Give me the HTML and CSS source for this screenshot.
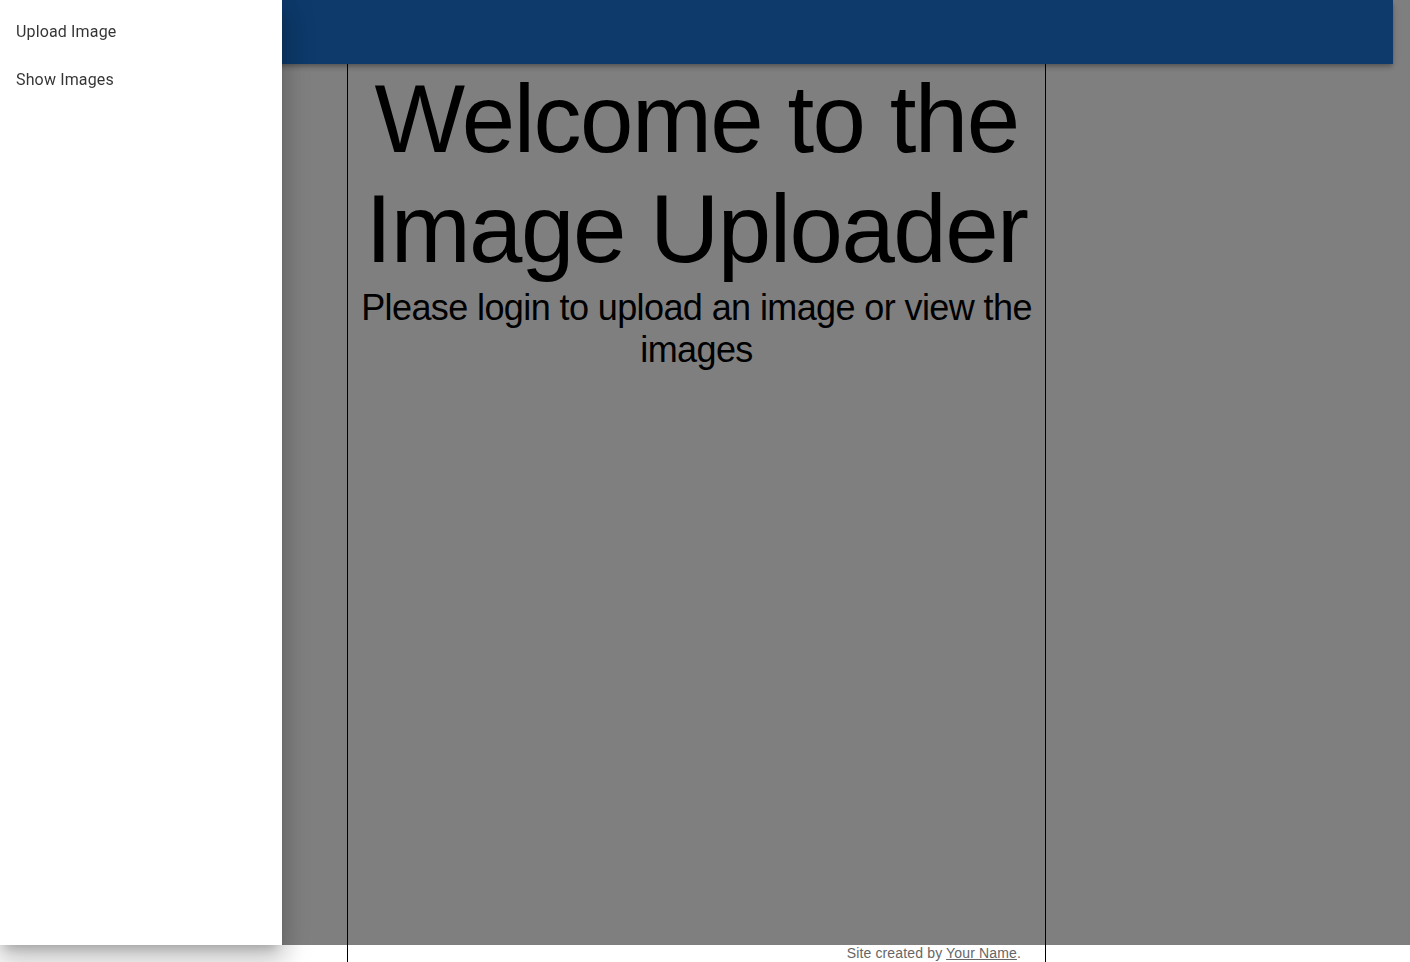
FILE: index.html
```html
<!DOCTYPE html>
<html lang="en">
<head>
<meta charset="utf-8">
<title>Image Uploader</title>
<link rel="stylesheet" href="styles.css">
</head>
<body>
<div class="page">
  <main class="column">
    <h1 class="title">Welcome to the Image Uploader</h1>
    <p class="subtitle">Please login to upload an image or view the images</p>
    <footer class="footer">Site created by <a href="#" class="footer-link">Your Name</a>.</footer>
  </main>
</div>
<div class="backdrop"></div>
<header class="app-bar"></header>
<nav class="drawer">
  <ul class="nav-list">
    <li class="nav-item"><span class="nav-text">Upload Image</span></li>
    <li class="nav-item"><span class="nav-text">Show Images</span></li>
  </ul>
</nav>
</body>
</html>
```

FILE: styles.css
```css
html, body {
  margin: 0;
  padding: 0;
  background: #ffffff;
  overflow: hidden;
}

body {
  font-family: "Liberation Sans", Arial, sans-serif;
  color: #000;
}

.page {
  width: 1393px;
}

.column {
  box-sizing: border-box;
  width: 699px;
  margin: 0 auto;
  border-left: 1px solid #000;
  border-right: 1px solid #000;
  padding-top: 64px;
  min-height: 962px;
  display: flex;
  flex-direction: column;
}

.title {
  margin: 0;
  font-size: 96px;
  font-weight: 400;
  line-height: normal;
  letter-spacing: -1.5px;
  text-align: center;
}

.subtitle {
  margin: 3px 0 0;
  padding: 0 12px;
  font-size: 36px;
  line-height: normal;
  letter-spacing: -0.6px;
  text-align: center;
}

.footer {
  margin-top: auto;
  padding: 0 24px 1px 0;
  font-size: 14px;
  line-height: 16px;
  letter-spacing: 0.15px;
  text-align: right;
  color: #666;
}

.footer-link {
  color: #666;
  text-decoration: underline;
}

.backdrop {
  position: fixed;
  top: 0;
  left: 0;
  width: 1410px;
  height: 945px;
  background: rgba(0, 0, 0, 0.5);
  z-index: 10;
}

.app-bar {
  position: fixed;
  top: 0;
  left: 0;
  width: 1393px;
  height: 64px;
  background: #0d3a6b;
  box-shadow: 0 2px 4px -1px rgba(0,0,0,0.2), 0 4px 5px 0 rgba(0,0,0,0.14), 0 1px 10px 0 rgba(0,0,0,0.12);
  z-index: 11;
}

.drawer {
  position: fixed;
  top: 0;
  left: 0;
  width: 282px;
  height: 945px;
  background: #fff;
  box-shadow: 0 8px 10px -5px rgba(0,0,0,0.2), 0 16px 24px 2px rgba(0,0,0,0.14), 0 6px 30px 5px rgba(0,0,0,0.12);
  z-index: 20;
  font-family: Roboto, "Liberation Sans", sans-serif;
}

.nav-list {
  list-style: none;
  margin: 0;
  padding: 8px 0 0;
}

.nav-item {
  padding: 8px 16px;
}

.nav-text {
  display: block;
  margin: 4px 0;
  font-size: 16px;
  line-height: 24px;
  letter-spacing: 0.15px;
  color: rgba(0, 0, 0, 0.8);
}
```
